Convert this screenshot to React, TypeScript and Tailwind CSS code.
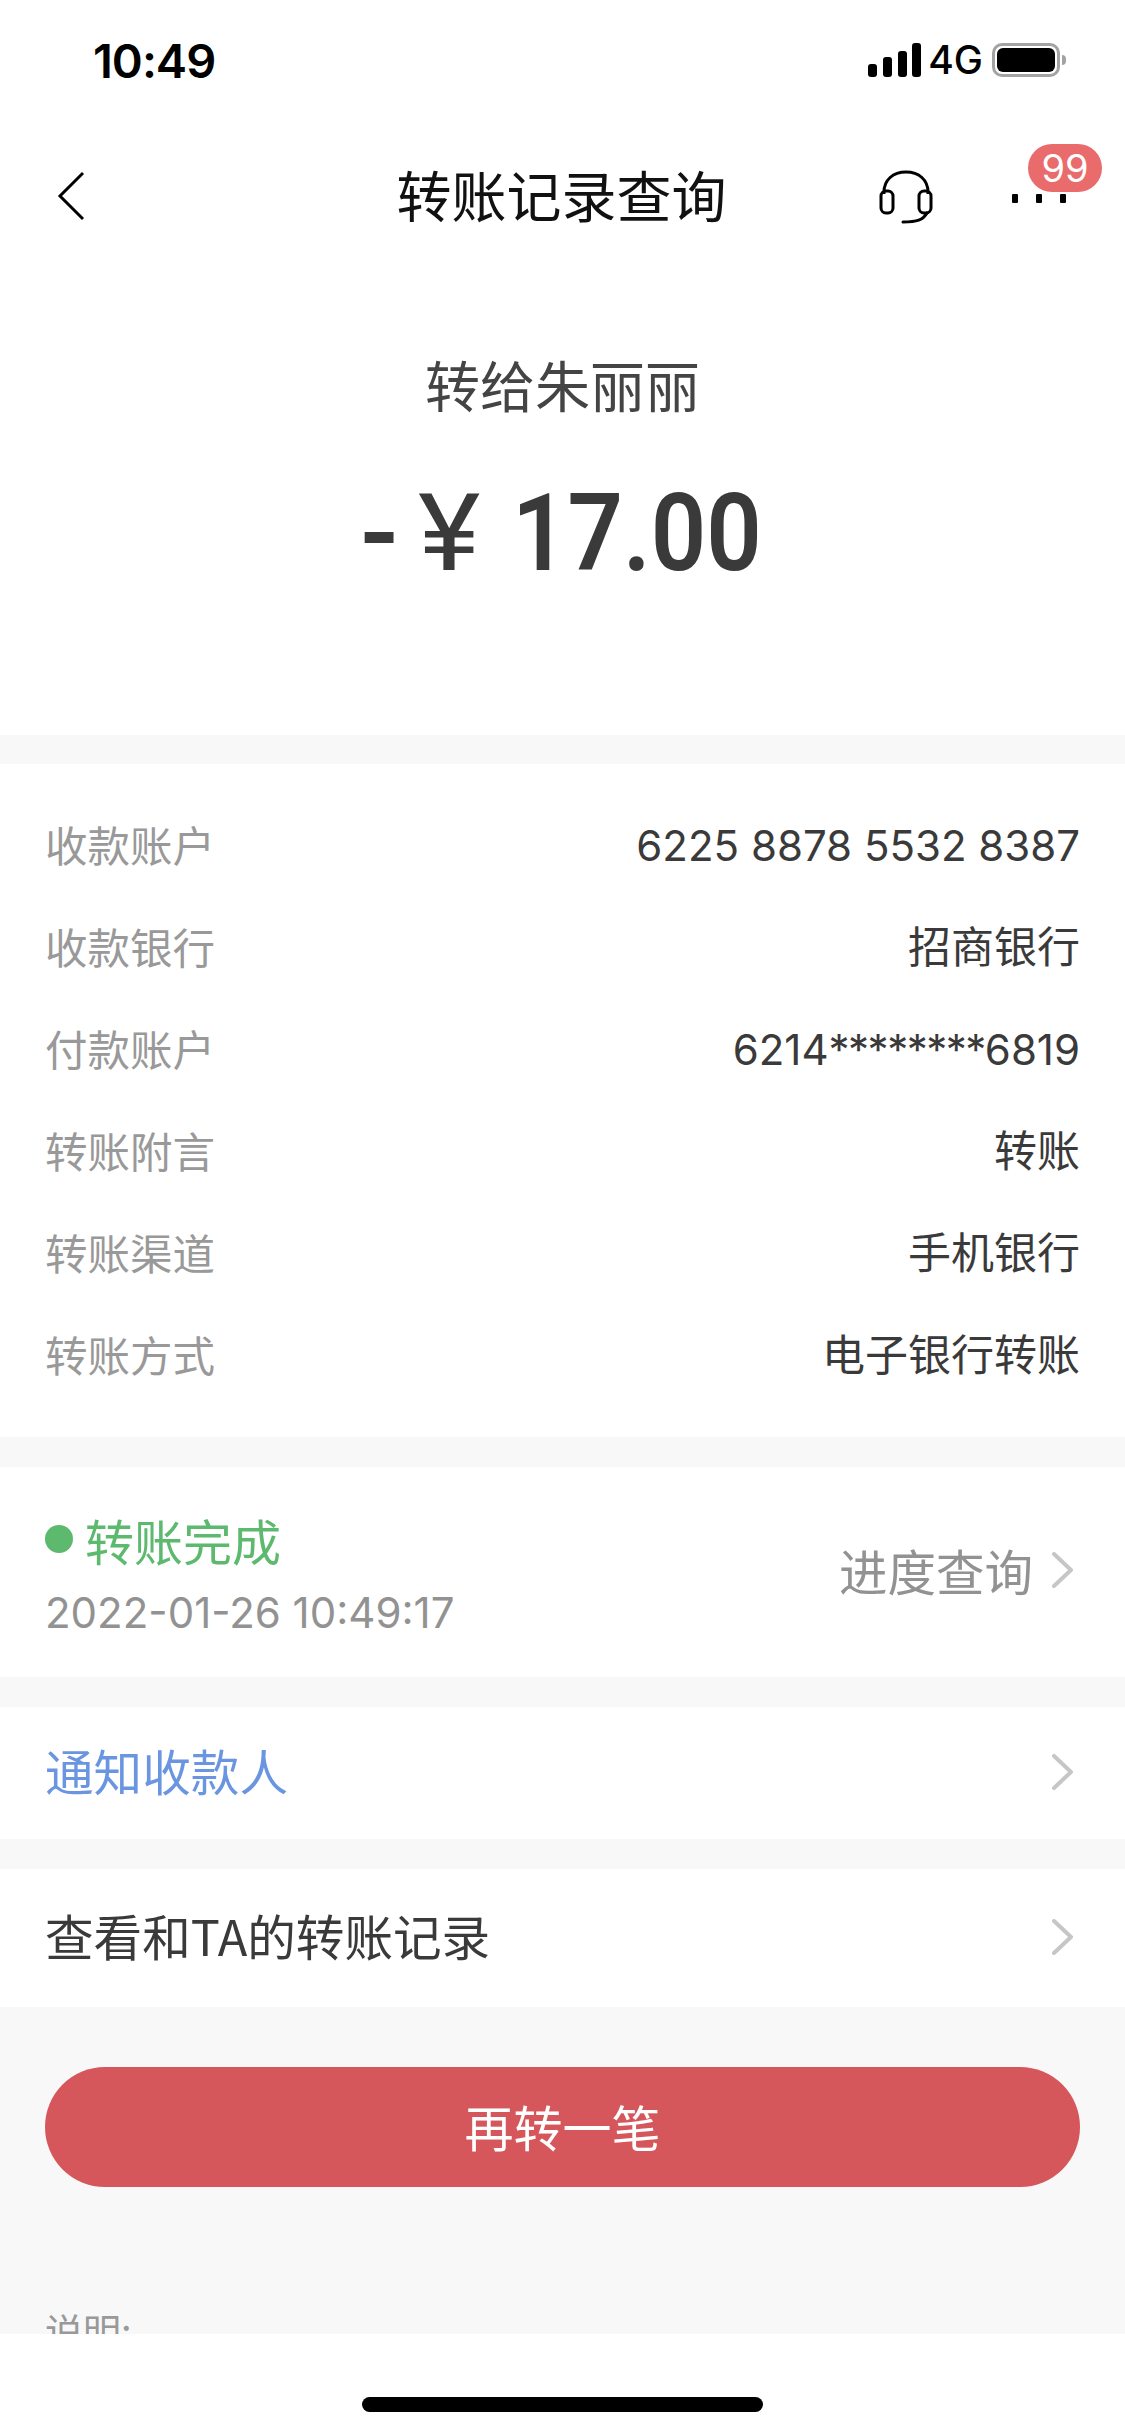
import React from 'react';

const cjk = "font-['Noto_Sans_CJK_SC','Noto_Sans',sans-serif]";

const details: { label: string; value: React.ReactNode; size: string }[] = [
  { label: '收款账户', value: '6225 8878 5532 8387', size: 'text-[42px]' },
  { label: '收款银行', value: '招商银行', size: 'text-[43px]' },
  {
    label: '付款账户',
    value: (
      <>
        6214<span className="tracking-[-1.5px]">********</span>6819
      </>
    ),
    size: 'text-[42px]',
  },
  { label: '转账附言', value: '转账', size: 'text-[43px]' },
  { label: '转账渠道', value: '手机银行', size: 'text-[43px]' },
  { label: '转账方式', value: '电子银行转账', size: 'text-[43px]' },
];

const Chevron = () => (
  <svg width="22" height="36" viewBox="0 0 22 36" fill="none" className="shrink-0 -mt-[3px]">
    <path d="M2 2 L19 18 L2 34" stroke="#c6c6c6" strokeWidth="4" strokeLinecap="round" strokeLinejoin="round" />
  </svg>
);

const StatusBar = () => (
  <div className="h-[120px] flex items-start justify-between pl-[93px] pr-[59px] pt-[43px]">
    <span className="font-['Inter',sans-serif] font-semibold text-[47px] leading-[36px] text-black tracking-[-1px]">10:49</span>
    <div className="flex items-start">
      <svg width="54" height="36" viewBox="0 0 54 36" className="shrink-0">
        <rect x="0" y="21" width="9" height="13" rx="3" fill="#000" />
        <rect x="15" y="14" width="9" height="20" rx="3" fill="#000" />
        <rect x="30" y="8" width="9" height="26" rx="3" fill="#000" />
        <rect x="44" y="0" width="9" height="34" rx="3" fill="#000" />
      </svg>
      <span className="ml-[6px] font-['Inter',sans-serif] text-[39px] leading-[34px] font-medium text-black">4G</span>
      <div className="ml-[9px] flex items-center">
        <div className="w-[68px] h-[34px] rounded-[10px] border-[3px] border-[#a3a3a3] p-[2px] flex">
          <div className="flex-1 rounded-[6px] bg-black" />
        </div>
        <div className="ml-[2px] w-[4px] h-[10px] rounded-r-full bg-[#a3a3a3]" />
      </div>
    </div>
  </div>
);

const NavBar = () => (
  <div className="relative h-[152px] grid grid-cols-[1fr_auto_1fr] items-center pl-[57px] pr-[59px]">
    <svg width="28" height="50" viewBox="0 0 28 50" fill="none" className="shrink-0 -mt-[1px]">
      <path d="M26 2 L3 25 L26 48" stroke="#000" strokeWidth="3" />
    </svg>
    <span className={`${cjk} text-[55px] leading-none text-[#111] pb-[6px]`}>转账记录查询</span>
    <div className="flex items-center justify-end gap-[79px]">
      <svg width="54" height="54" viewBox="0 0 54 54" fill="none" className="mt-[2px]">
        <path d="M5 24 V22 C5 10 14 2 27 2 C40 2 49 10 49 22 V24" stroke="#000" strokeWidth="3" />
        <rect x="2" y="21" width="12" height="22" rx="5" stroke="#000" strokeWidth="3" />
        <rect x="40" y="21" width="12" height="22" rx="5" stroke="#000" strokeWidth="3" />
        <path d="M48 43 C44 50 38 52 24 52" stroke="#000" strokeWidth="3" strokeLinecap="round" />
      </svg>
      <div className="flex gap-[18px] mt-[4px]">
        <div className="w-[6px] h-[9px] rounded-[1px] bg-black" />
        <div className="w-[6px] h-[9px] rounded-[1px] bg-black" />
        <div className="w-[6px] h-[9px] rounded-[1px] bg-black" />
      </div>
    </div>
    {/* badge sits over the dots */}
    <div className="absolute left-[1028px] top-[24px] w-[74px] h-[48px] rounded-full bg-[#e96b6b] flex items-center justify-center font-['Inter',sans-serif] text-[38px] leading-none text-white">
      99
    </div>
  </div>
);

const Hero = () => (
  <div className="h-[463px] flex flex-col items-center pt-[84px]">
    <span className={`${cjk} text-[55px] leading-none text-[#444]`}>转给朱丽丽</span>
    <div className="mt-[68px] pr-[9px] flex items-center font-['Roboto',sans-serif] font-semibold text-[108px] leading-none text-[#3a3a3a]">
      <span className="w-[58px]">-</span>
      <span className="w-[94px] font-normal scale-x-110 origin-left">¥</span>
      <span className="w-[245px] scale-x-[0.9] origin-left whitespace-nowrap">17.00</span>
    </div>
  </div>
);

const DetailList = () => (
  <div className="bg-white mt-[29px] pt-[29px] pb-[32px]">
    {details.map((d) => (
      <div key={d.label} className="h-[102px] flex items-center justify-between px-[45px] leading-none">
        <span className={`${cjk} text-[42.5px] text-[#999]`}>{d.label}</span>
        <span className={`font-['Inter','Noto_Sans_CJK_SC',sans-serif] ${d.size} pt-[3px] text-[#3a3a3a]`}>{d.value}</span>
      </div>
    ))}
  </div>
);

const StatusCard = () => (
  <div className="bg-white mt-[30px] h-[210px] flex items-center justify-between pl-[45px] pr-[51px]">
    <div className="flex flex-col gap-[28px] pt-[4px]">
      <div className="flex items-center gap-[12px]">
        <div className="w-[28px] h-[28px] rounded-full bg-[#5cb96e]" />
        <span className={`${cjk} text-[49px] leading-none text-[#5cb96e]`}>转账完成</span>
      </div>
      <span className="font-['Inter',sans-serif] text-[42px] leading-none text-[#929292]">2022-01-26 10:49:17</span>
    </div>
    <div className="flex items-center gap-[19px] pb-[2px]">
      <span className={`${cjk} text-[48.5px] leading-none pb-[2px] text-[#929292]`}>进度查询</span>
      <Chevron />
    </div>
  </div>
);

const LinkRow = ({ text, color, height }: { text: string; color: string; height: string }) => (
  <div className={`bg-white mt-[30px] ${height} flex items-center justify-between pl-[45px] pr-[51px]`}>
    <span className={`${cjk} text-[48.6px] leading-none pb-[5px] ${color}`}>{text}</span>
    <Chevron />
  </div>
);

export default function App() {
  return (
    <div className="w-[1125px] h-[2436px] bg-white flex flex-col overflow-hidden">
      <StatusBar />
      <NavBar />
      <div className="h-[2062px] bg-[#f8f8f8] overflow-hidden">
        <div className="bg-white">
          <Hero />
        </div>
        <DetailList />
        <StatusCard />
        <LinkRow text="通知收款人" color="text-[#6a95e0]" height="h-[132px]" />
        <LinkRow text="查看和TA的转账记录" color="text-[#3a3a3a]" height="h-[138px]" />
        <button className={`mt-[60px] ml-[45px] w-[1035px] h-[120px] rounded-full bg-[#d5565b] pb-[4px] ${cjk} text-[49px] leading-none text-white`}>
          再转一笔
        </button>
        <p className={`mt-[124px] ml-[45px] ${cjk} text-[38px] leading-none text-[#999]`}>说明:</p>
      </div>
      <div className="flex-1 flex items-end justify-center pb-[24px]">
        <div className="w-[401px] h-[15px] rounded-full bg-black" />
      </div>
    </div>
  );
}
